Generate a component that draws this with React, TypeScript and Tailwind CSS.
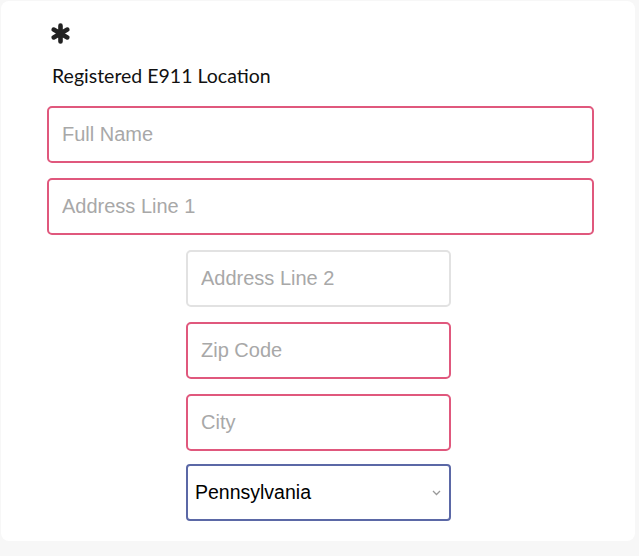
const wideFields = ["Full Name", "Address Line 1"];

function Field({ placeholder, invalid }: { placeholder: string; invalid?: boolean }) {
  return (
    <input
      type="text"
      placeholder={placeholder}
      className={`h-[57px] w-full rounded-[5px] border-2 bg-white pl-[13px] text-[20px] text-black outline-none placeholder:text-[#a8a8a8] ${
        invalid ? "border-[#e0587d]" : "border-[#e2e2e2]"
      }`}
      style={{ fontFamily: '"Liberation Sans", Arial, sans-serif' }}
    />
  );
}

export default function App() {
  return (
    <div className="min-h-[556px] w-[639px] bg-[#f7f7f7] pt-[1px] pl-[1px]">
      <div className="h-[540px] w-[634px] rounded-lg bg-white pl-[46px] pr-[41px] pt-[22px]">
        {/* Required marker + label */}
        <svg className="ml-[3px] h-[21px] w-[21px]" viewBox="0 0 20 20" stroke="#222" strokeWidth="4.4" strokeLinecap="round">
          <path d="M10 2.5v15M3.5 6.25l13 7.5M3.5 13.75l13-7.5" />
        </svg>
        <p
          className="mt-[20px] ml-[5px] text-[19.5px] leading-6 text-[#111]"
          style={{ fontFamily: "Lato, sans-serif" }}
        >
          Registered E911 Location
        </p>

        <div className="mt-[18px] flex flex-col gap-[15px]">
          {wideFields.map((f) => (
            <Field key={f} placeholder={f} invalid />
          ))}

          <div className="ml-[139px] flex w-[265px] flex-col gap-[15px]">
            <Field placeholder="Address Line 2" />
            <Field placeholder="Zip Code" invalid />
            <Field placeholder="City" invalid />

            <div className="relative -mt-[2px]">
              <select
                defaultValue="PA"
                className="h-[57px] w-full appearance-none rounded-[4px] border-2 border-[#5b68a6] bg-white pl-[7px] text-[19.5px] text-black outline-none"
                style={{ fontFamily: '"Liberation Sans", Arial, sans-serif' }}
              >
                <option value="NJ">New Jersey</option>
                <option value="NY">New York</option>
                <option value="PA">Pennsylvania</option>
              </select>
              <svg
                className="pointer-events-none absolute right-[10px] top-[26px] h-[6px] w-[9px]"
                viewBox="0 0 9 6"
                fill="none"
                stroke="#9a9a9a"
                strokeWidth="1.3"
              >
                <path d="M1 1l3.5 3.5L8 1" />
              </svg>
            </div>
          </div>
        </div>
      </div>
    </div>
  );
}
